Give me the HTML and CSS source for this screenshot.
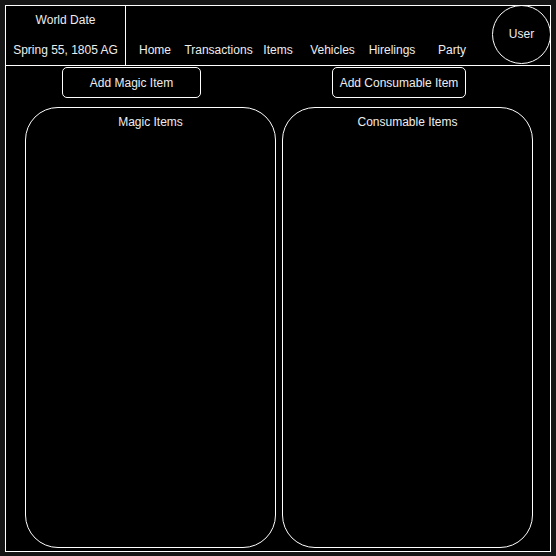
FILE: index.html
```html
<!DOCTYPE html>
<html lang="en">

<head>
    <meta charset="UTF-8">
    <title>Items</title>
    <link rel="stylesheet" href="styles.css">
</head>

<body>
    <div class="frame">
        <div class="header">
            <div class="date">
                <span>World Date</span>
                <span class="date-value">Spring 55, 1805 AG</span>
            </div>
            <div class="nav">
                <a href="javascript:;">Home</a>
                <a href="javascript:;">Transactions</a>
                <a href="javascript:;">Items</a>
                <a href="javascript:;">Vehicles</a>
                <a href="javascript:;">Hirelings</a>
                <a href="javascript:;">Party</a>
            </div>
            <div class="user">User</div>
        </div>
        <div class="toolbar">
            <button class="btn btn-magic">Add Magic Item</button>
            <button class="btn btn-consumable">Add Consumable Item</button>
        </div>
        <div class="panels">
            <div class="panel">
                <div class="panel-title">Magic Items</div>
            </div>
            <div class="panel">
                <div class="panel-title">Consumable Items</div>
            </div>
        </div>
    </div>
</body>

</html>
```

FILE: styles.css
```css
* {
    padding: 0px;
    margin: 0px;
    box-sizing: border-box;
}

body {
    background: #151515;
    font-family: "Liberation Sans", Arial, sans-serif;
    font-size: 12px;
    line-height: 14px;
    color: #eee;
}

.frame {
    margin: 5px;
    width: 546px;
    height: 547px;
    border: 1px solid #fff;
    background: #000;
    display: flex;
    flex-direction: column;
}

.header {
    display: flex;
    height: 60px;
    border-bottom: 1px solid #fff;
}

.date {
    width: 120px;
    border-right: 1px solid #fff;
    display: flex;
    flex-direction: column;
    align-items: center;
    padding-top: 7px;
}

.date-value {
    margin-top: 16px;
}

.nav {
    display: grid;
    grid-template-columns: 58px 69px 50px 59px 60px 60px;
    padding-top: 37px;
    text-align: center;
}

.nav a {
    color: #eee;
    text-decoration: none;
}

.user {
    margin: -1px -1px 0 auto;
    width: 59px;
    height: 59px;
    border: 1px solid #fff;
    border-radius: 50%;
    display: flex;
    align-items: center;
    justify-content: center;
    padding-bottom: 2px;
    align-self: flex-start;
    flex-shrink: 0;
}

.toolbar {
    display: flex;
    padding: 1px 0 0 56px;
}

.btn {
    height: 31px;
    border: 1px solid #fff;
    border-radius: 5px;
    background: #000;
    color: #eee;
    font-family: inherit;
    font-size: 12px;
}

.btn-magic {
    width: 139px;
}

.btn-consumable {
    width: 134px;
    margin-left: 131px;
}

.panels {
    display: flex;
    gap: 6px;
    padding: 9px 0 0 19px;
}

.panel {
    width: 251px;
    height: 441px;
    border: 1px solid #fff;
    border-radius: 33px;
}

.panel-title {
    text-align: center;
    padding-top: 7px;
}
```
